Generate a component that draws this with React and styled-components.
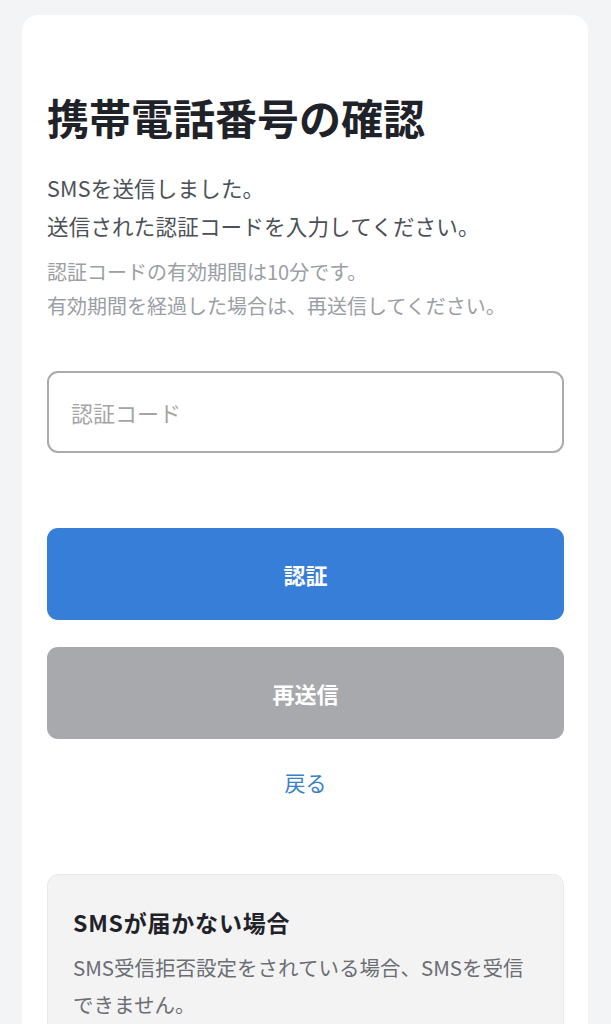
import React from "react";
import styled, { createGlobalStyle } from "styled-components";

const Global = createGlobalStyle`
  html, body { margin: 0; padding: 0; background: #f3f4f6; }
  body { font-family: "Noto Sans CJK JP", "Noto Sans", sans-serif; }
  * { box-sizing: border-box; }
`;

const Page = styled.div`
  padding: 15px 23px 40px 22px;
  min-height: 1024px;
`;

const Card = styled.div`
  background: #ffffff;
  border-radius: 16px;
  padding: 72px 24px 40px 25px;
  display: flex;
  flex-direction: column;
`;

const Title = styled.h1`
  margin: 0;
  font-size: 42px;
  font-weight: 700;
  line-height: 60px;
  color: #1f2329;
`;

const Lead = styled.p`
  margin: 22px 0 0;
  font-size: 21.5px;
  line-height: 38px;
  color: #4b5058;
  letter-spacing: 0.2px;
`;

const Note = styled.p`
  margin: 10px 0 0;
  font-size: 20px;
  line-height: 34px;
  color: #9a9ea5;
`;

const Input = styled.input`
  margin-top: 48px;
  width: 100%;
  height: 82px;
  border: 2.5px solid #a9abae;
  border-radius: 11px;
  padding: 0 22px;
  font-family: inherit;
  font-size: 22px;
  color: #374151;
  outline: none;
  &::placeholder { color: #a5a5a5; }
`;

const Button = styled.button`
  width: 100%;
  height: 92px;
  border: none;
  border-radius: 11px;
  background: ${(p) => p.$bg};
  color: #ffffff;
  font-family: inherit;
  font-size: 22px;
  font-weight: 700;
  margin-top: ${(p) => p.$mt}px;
`;

const BackLink = styled.a`
  display: block;
  text-align: center;
  margin-top: 26px;
  font-size: 21px;
  line-height: 34px;
  color: #3a80c5;
  text-decoration: none;
`;

const InfoBox = styled.div`
  margin-top: 75px;
  background: #f3f3f4;
  border: 1px solid #e9e9ea;
  border-radius: 11px;
  padding: 32px 30px 24px 25px;
`;

const InfoTitle = styled.h2`
  margin: 0;
  font-size: 23px;
  font-weight: 700;
  line-height: 30px;
  letter-spacing: 0.8px;
  color: #1f2329;
`;

const InfoText = styled.p`
  margin: 12px 0 0;
  font-size: 20.5px;
  line-height: 37px;
  color: #6b6e73;
`;

export default function App() {
  return (
    <>
      <Global />
      <Page>
        <Card>
          <Title>携帯電話番号の確認</Title>
          <Lead>
            SMSを送信しました。
            <br />
            送信された認証コードを入力してください。
          </Lead>
          <Note>
            認証コードの有効期間は10分です。
            <br />
            有効期間を経過した場合は、再送信してください。
          </Note>
          <Input placeholder="認証コード" />
          <Button $bg="#377ed8" $mt={75}>認証</Button>
          <Button $bg="#a7a9ad" $mt={27}>再送信</Button>
          <BackLink href="#">戻る</BackLink>
          <InfoBox>
            <InfoTitle>SMSが届かない場合</InfoTitle>
            <InfoText>
              SMS受信拒否設定をされている場合、SMSを受信できません。
              <br />
              詳細はご利用のキャリアにご確認ください。
            </InfoText>
          </InfoBox>
        </Card>
      </Page>
    </>
  );
}
